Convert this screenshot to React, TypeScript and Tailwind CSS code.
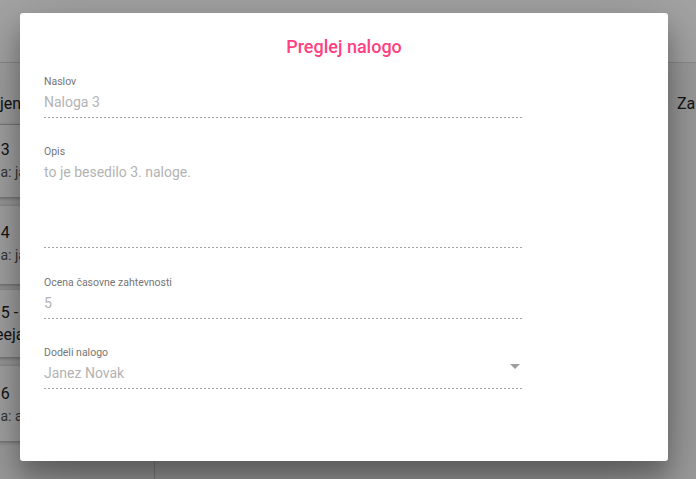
import React from "react";

function Card({
  title,
  sub,
  extra,
  pad,
}: {
  title: string;
  sub?: string;
  extra?: string;
  pad: string;
}) {
  return (
    <div className={`bg-white shadow-[0_1px_4px_rgba(0,0,0,0.35)] pl-4 pr-4 ${pad}`}>
      <div className="text-[16px] leading-[22px] text-[#222] whitespace-nowrap">{title}</div>
      {extra && <div className="text-[16px] leading-[22px] text-[#222] whitespace-nowrap">{extra}</div>}
      {sub && <div className="text-[14px] leading-[22px] text-[#555] whitespace-nowrap">{sub}</div>}
    </div>
  );
}

function Field({
  label,
  value,
  tall,
  select,
}: {
  label: string;
  value: string;
  tall?: boolean;
  select?: boolean;
}) {
  return (
    <div className="relative w-[478px]">
      <div className="text-[10.5px] leading-[16px] text-[#757575]">{label}</div>
      <div className={`text-[14px] leading-[24px] text-[#b3b3b3] ${tall ? "h-[84px]" : "h-[24px]"}`}>{value}</div>
      <div className="mt-[3px] h-px bg-[linear-gradient(to_right,#a3a3a3_50%,transparent_50%)] bg-[length:4px_1px]" />
      {select && (
        <svg className="absolute right-[1px] top-[18px]" width="12" height="7" viewBox="0 0 12 7">
          <path d="M1 1 L11 1 L6 6 Z" fill="#9e9e9e" />
        </svg>
      )}
    </div>
  );
}

export default function App() {
  return (
    <div className="relative w-[696px] h-[479px] overflow-hidden bg-[#f2f2f2] font-['Roboto',sans-serif]">
      {/* background page */}
      <div className="h-[63px] bg-white border-b border-[#d8d8d8]" />
      <div className="flex h-[416px]">
        <div className="w-[155px] shrink-0 border-r border-[#c8c8c8] overflow-hidden">
          <div className="-ml-[70px] w-[225px]">
            <div className="h-[62px] pt-[30px] pl-[29px] text-[16px] leading-[22px] text-[#222] bg-[#fafafa] border-b border-[#cfcfcf] whitespace-nowrap">
              Dodeljene
            </div>
            <div className="flex flex-col">
              <Card pad="pt-[14px] pb-[14px] mb-[9px]" title="Naloga 3" sub="Dodeljena: janez" />
              <Card pad="pt-[16px] pb-[18px] mb-[6px]" title="Naloga 4" sub="Dodeljena: janez" />
              <Card pad="pt-[12px] pb-[11px] mb-[9px]" title="Naloga 5 -" extra="Opis ideeja" />
              <Card pad="pt-[17px] pb-[14px]" title="Naloga 6" sub="Dodeljena: ana" />
            </div>
          </div>
        </div>
        <div className="flex-1" />
        <div className="w-[28px] shrink-0 overflow-hidden">
          <div className="h-[62px] pt-[30px] pl-[9px] text-[16px] leading-[22px] text-[#222] whitespace-nowrap">
            Zaključene
          </div>
        </div>
      </div>

      {/* overlay */}
      <div className="absolute inset-0 bg-black/[0.36]" />

      {/* dialog */}
      <div className="absolute left-[20px] top-[13px] w-[648px] h-[448px] bg-white rounded-[3px] shadow-[0_19px_60px_rgba(0,0,0,0.3),0_15px_20px_rgba(0,0,0,0.22)]">
        <div className="pt-[22px] text-center text-[18px] leading-[24px] font-medium text-[#ff4081]">
          Preglej nalogo
        </div>
        <div className="px-6 pt-[15px] flex flex-col">
          <Field label="Naslov" value="Naloga 3" />
          <div className="h-[26px]" />
          <Field label="Opis" value="to je besedilo 3. naloge." tall />
          <div className="h-[27px]" />
          <Field label="Ocena časovne zahtevnosti" value="5" />
          <div className="h-[26px]" />
          <Field label="Dodeli nalogo" value="Janez Novak" select />
        </div>
      </div>
    </div>
  );
}
